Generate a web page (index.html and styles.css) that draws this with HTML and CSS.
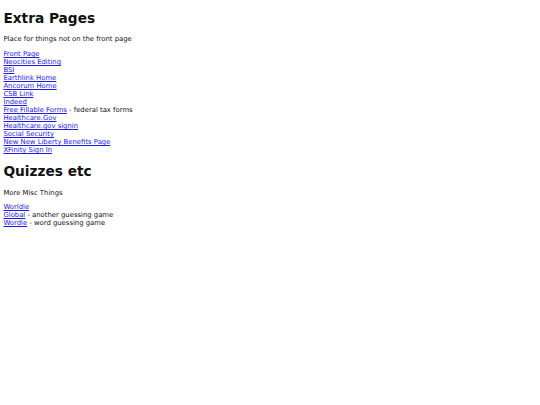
FILE: index.html
```html
<!DOCTYPE html>
<html>
<head>
<meta charset="utf-8">
<link rel="stylesheet" href="styles.css">
</head>
<body>
<h1 class="title first">Extra Pages</h1>
<p class="intro">Place for things not on the front page</p>
<div class="links">
<div><a href="#">Front Page</a></div>
<div><a href="#">Neocities Editing</a></div>
<div><a href="#">BSI</a></div>
<div><a href="#">Earthlink Home</a></div>
<div><a href="#">Ancorum Home</a></div>
<div><a href="#">CSB Link</a></div>
<div><a href="#">Indeed</a></div>
<div><a href="#">Free Fillable Forms</a> - federal tax forms</div>
<div><a href="#">Healthcare.Gov</a></div>
<div><a href="#">Healthcare.gov signin</a></div>
<div><a href="#">Social Security</a></div>
<div><a href="#">New New Liberty Benefits Page</a></div>
<div><a href="#">XFinity Sign In</a></div>
</div>
<h1 class="title">Quizzes etc</h1>
<p class="intro">More Misc Things</p>
<div class="links">
<div><a href="#">Worldle</a></div>
<div><a href="#">Global</a> - another guessing game</div>
<div><a href="#">Wordle</a> - word guessing game</div>
</div>
</body>
</html>
```
FILE: styles.css
```css
body {
  margin: 0 3.43px 3.43px;
  font-family: "DejaVu Sans", sans-serif;
  font-size: 6.857px;
  color: #111;
  background: #fff;
}
.title {
  font-size: 13.714px;
  font-weight: bold;
  margin: 9.19px 0;
}
.title.first {
  margin-top: 10.2px;
}
.intro {
  margin: 6.86px 0;
}
.links {
  margin: 6.86px 0;
}
.links a {
  color: #1a1aee;
}
```
